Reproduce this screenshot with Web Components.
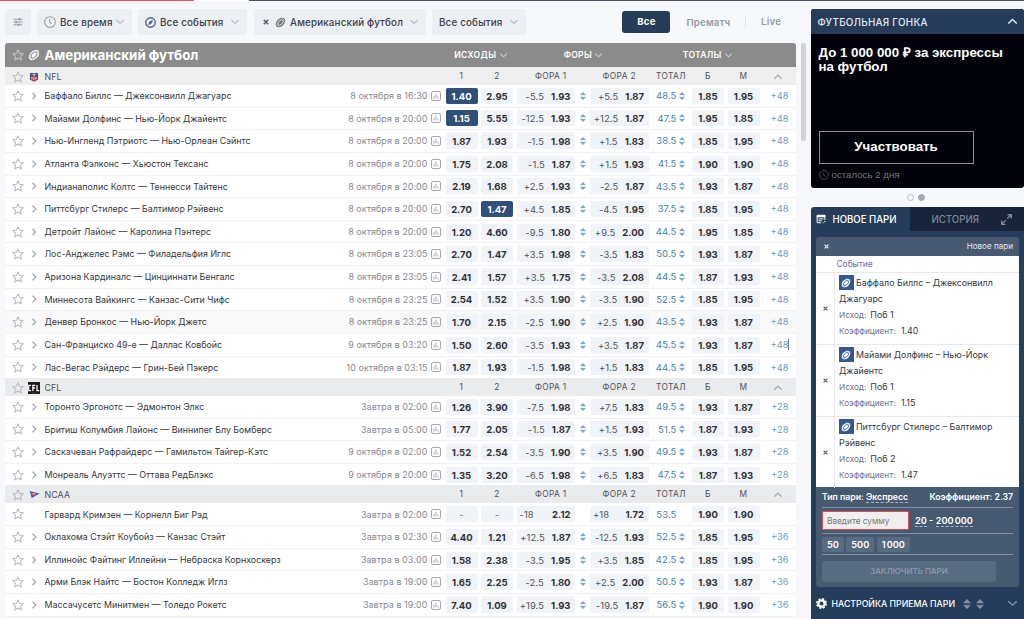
<!DOCTYPE html>
<html lang="ru">
<head>
<meta charset="utf-8">
<title>Линия</title>
<style>
    html, body { margin: 0; height: 100%; }
    body {
        width: 1024px;
        height: 619px;
        overflow: hidden;
        background: #f7f8fb;
        color: #3b3f46;
        font-family: Inter, "Liberation Sans", sans-serif;
    }
</style>
</head>
<body>
<betting-page></betting-page>

<script>
const BALL = `<g transform="rotate(-45 8 8)"><ellipse cx="8" cy="8" rx="8.2" ry="5.4" fill="currentColor"/><ellipse cx="8" cy="8" rx="4.8" ry="3" fill="none" stroke="var(--seam, #8b8b8b)" stroke-width="1.3"/><path d="M2 5.500v5M14 5.500v5" stroke="var(--seam, #8b8b8b)" stroke-width=".8"/></g>`;

const ICONS = {
    star: `<path d="M8 1.2l2.1 4.6 5 .5-3.8 3.3 1.1 5L8 12l-4.4 2.6 1.1-5L.9 6.3l5-.5z" fill="none" stroke="currentColor" stroke-width="1.4" stroke-linejoin="round"/>`,
    right: `<path d="M5 1.500l6.500 6.500L5 14.500" fill="none" stroke="currentColor" stroke-width="2.6"/>`,
    down: `<path d="M.5 4l7.500 7L15.500 4" fill="none" stroke="currentColor" stroke-width="2.4"/>`,
    up: `<path d="M.5 11.5L8 4.500l7.500 7" fill="none" stroke="currentColor" stroke-width="2.6"/>`,
    close: `<path d="M2 2l12 12M14 2L2 14" fill="none" stroke="currentColor" stroke-width="3.8"/>`,
    ball: BALL,
    clock: `<circle cx="8" cy="8" r="7.1" fill="none" stroke="currentColor" stroke-width="1.4"/><path d="M7.6 3.8V8.4l2.8 1.8" fill="none" stroke="currentColor" stroke-width="1.4"/>`,
    compass: `<circle cx="8" cy="8" r="6.9" fill="none" stroke="currentColor" stroke-width="1.9"/><path d="M12 4L9.4 9.4 4 12l2.6-5.4z" fill="currentColor"/>`,
    sliders: `<path d="M1 3.5h14M1 8h14M1 12.5h14" stroke="currentColor" stroke-width="1.6"/><path d="M10.5 1.5v4M5 6v4M9 10.5v4" stroke="currentColor" stroke-width="2.6"/>`,
    stats: `<rect x=".8" y=".8" width="14.4" height="14.4" rx="2.5" fill="none" stroke="currentColor" stroke-width="1.6"/><path d="M4.8 7.5V12M8 4v8M11.2 9v3" stroke="currentColor" stroke-width="1.5"/>`,
    sort: `<path d="M8 0l6 6.200H2zM8 16l6-6.200H2z" fill="currentColor"/><path d="M2 8h12" stroke="currentColor" stroke-width=".7"/>`,
    expand: `<path d="M9.5 1H15v5.5M15 1L9 7M6.500 15H1V9.500M1 15l6-6" fill="none" stroke="currentColor" stroke-width="2"/>`,
    slip: `<path d="M1 1h14v4H1z" fill="currentColor"/><path d="M1.800 4v10h6.500M14.200 4v5.500M4 7.800h8M4 10.800h5" fill="none" stroke="currentColor" stroke-width="1.600"/><path d="M9.500 15l5.500-4.500v2z" fill="currentColor"/>`,
    gear: `<circle cx="8" cy="8" r="4.600" fill="none" stroke="currentColor" stroke-width="3.400"/><circle cx="8" cy="8" r="6.800" fill="none" stroke="currentColor" stroke-width="2.200" stroke-dasharray="3.100 2.240"/>`,
    nfl: `<path d="M1.500 2.200L4 1l4 .8L12 1l2.500 1.200V12L8 15.600 1.500 12z" fill="#2b4c86"/><path d="M2.800 7h10.400v4.600L8 14.300l-5.200-2.700z" fill="#e04a50"/><path d="M4.500 8v3.500M8 8v4.500M11 8v3" stroke="#fff" stroke-width=".9"/><path d="M4 4h2M10 4h2M7.500 3h1v3h-1z" stroke="#fff" stroke-width="1"/>`,
    cfl: `<rect width="16" height="16" fill="#1c1b1c"/><path d="M4 4.500H1v7h3M6.500 12V4.500h3.200M6.500 8h2.800M12 4v7.500h3" fill="none" stroke="#fff" stroke-width="1.700"/><path d="M5 14.500h6" stroke="#a33" stroke-width=".8"/>`,
    ncaa: `<path d="M1 3l14.500 3.500L4 13z" fill="#3763ad"/><path d="M3.500 5.200l8 1.800-6.500 3.600z" fill="#e2415f"/><path d="M5 7h4" stroke="#fff" stroke-width="1"/>`
};

const NFL = [
    ["Баффало Биллс — Джексонвилл Джагуарс", "8 октября в 16:30", "*1.40", "2.95", "-5.5", "1.93", "+5.5", "1.87", "48.5", "1.85", "1.95", "+48"],
    ["Майами Долфинс — Нью-Йорк Джайентс", "8 октября в 20:00", "*1.15", "5.55", "-12.5", "1.93", "+12.5", "1.87", "47.5", "1.95", "1.85", "+48"],
    ["Нью-Ингленд Пэтриотс — Нью-Орлеан Сэйнтс", "8 октября в 20:00", "1.87", "1.93", "-1.5", "1.98", "+1.5", "1.83", "38.5", "1.85", "1.95", "+48"],
    ["Атланта Фэлконс — Хьюстон Тексанс", "8 октября в 20:00", "1.75", "2.08", "-1.5", "1.87", "+1.5", "1.93", "41.5", "1.90", "1.90", "+48"],
    ["Индианаполис Колтс — Теннесси Тайтенс", "8 октября в 20:00", "2.19", "1.68", "+2.5", "1.93", "-2.5", "1.87", "43.5", "1.93", "1.87", "+48"],
    ["Питтсбург Стилерс — Балтимор Рэйвенс", "8 октября в 20:00", "2.70", "*1.47", "+4.5", "1.85", "-4.5", "1.95", "37.5", "1.85", "1.95", "+48"],
    ["Детройт Лайонс — Каролина Пэнтерс", "8 октября в 20:00", "1.20", "4.60", "-9.5", "1.80", "+9.5", "2.00", "44.5", "1.95", "1.85", "+48"],
    ["Лос-Анджелес Рэмс — Филадельфия Иглс", "8 октября в 23:05", "2.70", "1.47", "+3.5", "1.98", "-3.5", "1.83", "50.5", "1.93", "1.87", "+48"],
    ["Аризона Кардиналс — Цинциннати Бенгалс", "8 октября в 23:05", "2.41", "1.57", "+3.5", "1.75", "-3.5", "2.08", "44.5", "1.87", "1.93", "+48"],
    ["Миннесота Вайкингс — Канзас-Сити Чифс", "8 октября в 23:25", "2.54", "1.52", "+3.5", "1.90", "-3.5", "1.90", "52.5", "1.85", "1.95", "+48"],
    ["Денвер Бронкос — Нью-Йорк Джетс", "8 октября в 23:25", "1.70", "2.15", "-2.5", "1.90", "+2.5", "1.90", "43.5", "1.93", "1.87", "+48", "hover"],
    ["Сан-Франциско 49-е — Даллас Ковбойс", "9 октября в 03:20", "1.50", "2.60", "-3.5", "1.93", "+3.5", "1.87", "45.5", "1.93", "1.87", "+48", "caret"],
    ["Лас-Вегас Рэйдерс — Грин-Бей Пэкерс", "10 октября в 03:15", "1.87", "1.93", "-1.5", "1.98", "+1.5", "1.83", "44.5", "1.85", "1.95", "+48"]
];

const CFL = [
    ["Торонто Эргонотс — Эдмонтон Элкс", "Завтра в 02:00", "1.26", "3.90", "-7.5", "1.98", "+7.5", "1.83", "49.5", "1.93", "1.87", "+28"],
    ["Бритиш Колумбия Лайонс — Виннипег Блу Бомберс", "Завтра в 05:00", "1.77", "2.05", "-1.5", "1.87", "+1.5", "1.93", "51.5", "1.87", "1.93", "+28"],
    ["Саскачеван Рафрайдерс — Гамильтон Тайгер-Кэтс", "9 октября в 02:00", "1.52", "2.54", "-3.5", "1.90", "+3.5", "1.90", "49.5", "1.93", "1.87", "+28"],
    ["Монреаль Алуэттс — Оттава РедБлэкс", "9 октября в 20:00", "1.35", "3.20", "-6.5", "1.98", "+6.5", "1.83", "47.5", "1.87", "1.93", "+28"]
];

const NCAA = [
    ["Гарвард Кримзен — Корнелл Биг Рэд", "Завтра в 02:00", "-", "-", "-18", "2.12", "+18", "1.72", "53.5", "1.90", "1.90", ""],
    ["Оклахома Стэйт Коубойз — Канзас Стэйт", "Завтра в 02:30", "4.40", "1.21", "+12.5", "1.87", "-12.5", "1.93", "52.5", "1.85", "1.95", "+36"],
    ["Иллинойс Файтинг Иллейни — Небраска Корнхоскерз", "Завтра в 03:00", "1.58", "2.38", "-3.5", "1.95", "+3.5", "1.85", "42.5", "1.85", "1.95", "+36"],
    ["Арми Блэк Найтс — Бостон Колледж Иглз", "Завтра в 19:00", "1.65", "2.25", "-2.5", "1.80", "+2.5", "2.00", "50.5", "1.93", "1.87", "+36"],
    ["Массачусетс Минитмен — Толедо Рокетс", "Завтра в 19:00", "7.40", "1.09", "+19.5", "1.93", "-19.5", "1.87", "56.5", "1.90", "1.90", "+36"]
];

// shared column tracks for the league bars and rows
const TRACKS = "22px 14px 386.5px 18px 35.5px 35.5px 58.5px 15px 59px 43px 35.5px 32px 36.5px";

class UiIcon extends HTMLElement {
    connectedCallback() {
        const size = this.getAttribute("size") || 10;
        const root = this.attachShadow({mode: "open"});
        root.innerHTML = `
        <style>
            :host { display: inline-block; flex: none; width: ${size}px; height: ${size}px; }
            svg { display: block; width: 100%; height: 100%; }
        </style>
        <svg viewBox="0 0 16 16">${ICONS[this.getAttribute("name")]}</svg>`;
    }
}
customElements.define("ui-icon", UiIcon);

class FilterChip extends HTMLElement {
    constructor() {
        super();
        this.attachShadow({mode: "open"}).innerHTML = `
        <style>
            :host {
                display: flex;
                align-items: center;
                box-sizing: border-box;
                height: 26px;
                padding: 0 8px 0 7px;
                border-radius: 3px;
                background: #eceff4;
                color: #3c4047;
                font-size: 9.8px;
                font-weight: 500;
                letter-spacing: .18px;
                white-space: nowrap;
            }
            .arrow { margin-left: auto; color: #b9bec6; }
            :host([plain]) .arrow { display: none; }
            :host([plain]) { justify-content: center; padding: 0; color: #9a9fa7; }
        </style>
        <slot></slot>
        <ui-icon class="arrow" name="down" size="8"></ui-icon>`;
    }
}
customElements.define("filter-chip", FilterChip);

class FilterBar extends HTMLElement {
    constructor() {
        super();
        this.attachShadow({mode: "open"}).innerHTML = `
        <style>
            :host { display: flex; height: 26px; align-items: center; }
            filter-chip { margin-right: 6px; }
            filter-chip ui-icon { margin-right: 4px; }
            .modes {
                display: flex;
                align-items: center;
                margin-left: auto;
                font-size: 9.6px;
                font-weight: 600;
                letter-spacing: .25px;
                color: #929aa5;
            }
            .on {
                width: 48px;
                height: 21.5px;
                line-height: 21.5px;
                border-radius: 3px;
                background: #253c5a;
                color: #fff;
                text-align: center;
                font-weight: 700;
                margin-right: 16px;
            }
            .live { margin-left: 14.5px; padding-left: 15px; border-left: 1px solid #e0e3e8; line-height: 12px; width: 35px; }
        </style>
        <filter-chip plain style="width:26px"><ui-icon name="sliders" size="10" style="margin:0"></ui-icon></filter-chip>
        <filter-chip style="width:95px"><ui-icon name="clock" size="12" style="color:#989da5"></ui-icon>Все время</filter-chip>
        <filter-chip style="width:109px;margin-right:7px"><ui-icon name="compass" size="11" style="color:#41608e"></ui-icon>Все события</filter-chip>
        <filter-chip style="width:172px"><ui-icon name="close" size="6" style="margin:0 6px 0 2px;color:#555e6b"></ui-icon><ui-icon name="ball" size="11" style="color:#777;--seam:#e4e7ec"></ui-icon>Американский футбол</filter-chip>
        <filter-chip style="width:94px">Все события</filter-chip>
        <div class="modes">
            <span class="on">Все</span>
            <span>Прематч</span>
            <span class="live">Live</span>
        </div>`;
    }
}
customElements.define("filter-bar", FilterBar);

class MatchRow extends HTMLElement {
    set match(match) {
        this._match = match;
        this.render();
    }

    cell(value) {
        const on = value[0] === "*";
        const cls = on ? "cell on" : value === "-" ? "cell none" : "cell";
        return `<span class="${cls}">${on ? value.slice(1) : value}</span>`;
    }

    render() {
        const [name, date, w1, w2, h1, o1, h2, o2, total, over, under, more, state] = this._match;
        const fixed = more === "";
        const pair = (h, o) => `<span class="cell pair"><i>${h}</i><b>${o}</b></span>`;
        this.attachShadow({mode: "open"}).innerHTML = `
        <style>
            :host {
                display: grid;
                grid-template-columns: ${TRACKS};
                align-items: center;
                box-sizing: border-box;
                height: 22.64px;
                border-bottom: 1px solid #f0f1f4;
                background: ${state === "hover" ? "#f9f9f9" : "#fff"};
                font-size: 9.5px;
                line-height: 16.5px;
                white-space: nowrap;
            }
            .star { margin-left: 6.7px; color: #b9bcc2; }
            .go { justify-self: center; color: #a7abb2; visibility: ${fixed ? "hidden" : "visible"}; }
            .event { display: flex; justify-content: space-between; padding: 1px 0 0 3.5px; }
            .name { font-size: 8.85px; color: #33373d; }
            .date { font-size: 9px; letter-spacing: .04px; color: #858a94; }
            .stats { margin-left: 3.5px; color: #a4a7ac; }
            .cell {
                box-sizing: border-box;
                width: 32px;
                height: 16px;
                line-height: 17px;
                border-radius: 2px;
                background: #f0f3f8;
                color: #2f3136;
                font-weight: 700;
                text-align: center;
            }
            .on { background: #2f5078; color: #fff; }
            .none { color: #777c84; font-weight: 400; }
            .pair {
                display: flex;
                justify-content: ${fixed ? "space-between" : "flex-end"};
                width: 58.5px;
                padding: 0 4.5px 0 ${fixed ? 3 : 0}px;
            }
            .pair b { font-weight: 700; }
            .pair i { font-style: normal; font-weight: 400; font-size: 9.4px; color: #50555d; margin-right: 7px; letter-spacing: .1px; }
            .sort { justify-self: center; color: #82aac3; }
            .total { display: flex; align-items: center; width: 37px; justify-content: flex-end; color: #457fa6; font-size: 9.5px; letter-spacing: .1px; }
            .total span, .more { padding-top: 1px; }
            .total span { margin-right: 1.5px; }
            .total ui-icon { color: #82aac3; visibility: ${fixed ? "hidden" : "visible"}; }
            .more { justify-self: end; padding-right: 7.5px; color: #6d9dbb; font-size: 9.3px; position: relative; }
            .caret { position: absolute; right: 7px; top: 3px; width: 1px; height: 11px; background: #4e7fa4; }
        </style>
        <ui-icon class="star" name="star" size="12"></ui-icon>
        <ui-icon class="go" name="right" size="8"></ui-icon>
        <div class="event"><span class="name">${name}</span><span class="date">${date}</span></div>
        <ui-icon class="stats" name="stats" size="10"></ui-icon>
        ${this.cell(w1)}${this.cell(w2)}${pair(h1, o1)}
        ${fixed ? "<span></span>" : `<ui-icon class="sort" name="sort" size="8"></ui-icon>`}
        ${pair(h2, o2)}
        <div class="total"><span>${total}</span><ui-icon name="sort" size="8"></ui-icon></div>
        ${this.cell(over)}${this.cell(under)}
        <span class="more">${more}${state === "caret" ? `<span class="caret"></span>` : ""}</span>`;
    }
}
customElements.define("match-row", MatchRow);

class LeagueGroup extends HTMLElement {
    set matches(matches) {
        this._matches = matches;
        this.render();
    }

    render() {
        const title = this.getAttribute("title-text");
        const root = this.attachShadow({mode: "open"});
        root.innerHTML = `
        <style>
            :host { display: block; }
            .bar {
                display: grid;
                grid-template-columns: ${TRACKS};
                align-items: center;
                height: 18px;
                background: var(--bar, #e9ebed);
                color: #4c525c;
                font-size: 8.3px;
                letter-spacing: .4px;
                line-height: 19px;
                white-space: nowrap;
                position: relative;
            }
            .star { margin-left: 6.7px; color: #b9bcc2; }
            .logo { justify-self: center; margin: 0 -2px; }
            .title { padding-left: 3.5px; font-size: 8.8px; letter-spacing: .1px; }
            .c { width: 32px; text-align: center; }
            .w { box-sizing: border-box; width: 58.5px; text-align: center; }
            .w1 { padding-left: 10px; }
            .t { padding-left: 7px; }
            .up { margin-left: 14px; color: #aeb1b6; }
        </style>
        <div class="bar">
            <ui-icon class="star" name="star" size="12"></ui-icon>
            <ui-icon class="logo" name="${this.getAttribute("logo")}" size="${this.getAttribute("logo-size")}"></ui-icon>
            <span class="title">${title}</span>
            <span></span>
            <span class="c">1</span><span class="c">2</span>
            <span class="w w1">ФОРА 1</span><span></span><span class="w">ФОРА 2</span>
            <span class="t">ТОТАЛ</span><span class="c">Б</span><span class="c">М</span>
            <ui-icon class="up" name="up" size="8"></ui-icon>
        </div>`;
        this._matches.forEach(match => {
            const row = document.createElement("match-row");
            row.match = match;
            root.appendChild(row);
        });
    }
}
customElements.define("league-group", LeagueGroup);

class SportTable extends HTMLElement {
    constructor() {
        super();
        const root = this.attachShadow({mode: "open"});
        root.innerHTML = `
        <style>
            :host {
                display: block;
                width: 791px;
                border-radius: 3px 3px 0 0;
                overflow: hidden;
                background: #fff;
            }
            .head {
                display: flex;
                align-items: center;
                height: 24px;
                background: #8b8b8b;
                color: #fff;
                white-space: nowrap;
            }
            .head > ui-icon:first-child { margin: 0 4.5px 0 6.7px; color: #c3c3c3; }
            h1 { margin: 0 0 0 4.3px; width: 409.7px; font-size: 13.3px; line-height: 24px; font-weight: 700; }
            .col { display: flex; align-items: center; gap: 3.5px; font-size: 8.6px; font-weight: 600; letter-spacing: .3px; line-height: 24px; }
            .col ui-icon { color: #c9c9c9; }
            league-group + league-group { margin-top: -1.1px; }
        </style>
        <div class="head">
            <ui-icon name="star" size="12"></ui-icon>
            <ui-icon name="ball" size="12"></ui-icon>
            <h1>Американский футбол</h1>
            <span class="col" style="width:109.5px">ИСХОДЫ <ui-icon name="down" size="7"></ui-icon></span>
            <span class="col" style="width:119px">ФОРЫ <ui-icon name="down" size="7"></ui-icon></span>
            <span class="col">ТОТАЛЫ <ui-icon name="down" size="7"></ui-icon></span>
        </div>
        <league-group title-text="NFL" logo="nfl" logo-size="10" style="--bar:#eee"></league-group>
        <league-group title-text="CFL" logo="cfl" logo-size="12"></league-group>
        <league-group title-text="NCAA" logo="ncaa" logo-size="11"></league-group>`;
        [NFL, CFL, NCAA].forEach((list, i) => {
            root.querySelectorAll("league-group")[i].matches = list;
        });
    }
}
customElements.define("sport-table", SportTable);

class PromoCard extends HTMLElement {
    constructor() {
        super();
        this.attachShadow({mode: "open"}).innerHTML = `
        <style>
            :host { display: block; font-family: "Liberation Sans", Arial, sans-serif; }
            .card { height: 178.500px; border-radius: 3px; overflow: hidden; background: #02020a; color: #fff; }
            header {
                display: flex;
                align-items: center;
                justify-content: space-between;
                height: 25px;
                padding: 0 7px;
                background: #253c5a;
                font: 500 9.900px Inter, sans-serif;
                letter-spacing: .25px;
                color: #e3e8ee;
            }
            .body { padding: 11.500px 8px 0; }
            h2 { margin: 0; height: 85.500px; font-size: 13.3px; line-height: 14.500px; font-weight: 700; }
            .join {
                box-sizing: border-box;
                width: 155px;
                height: 32.500px;
                border: 1px solid #8d8d90;
                line-height: 30px;
                text-align: center;
                font-size: 13.3px;
                font-weight: 700;
            }
            .left { display: flex; align-items: center; gap: 3px; margin-top: 5px; font-size: 9.700px; line-height: 12px; color: #77777b; }
            .left ui-icon { color: #4c4c50; }
            .dots { display: flex; justify-content: center; gap: 4px; padding: 6px 3px 0 0; }
            .dots span { box-sizing: border-box; width: 7px; height: 7px; border-radius: 50%; border: 1px solid #b9bfc8; }
            .dots .on { background: #a0a9b5; border-color: #a0a9b5; }
        </style>
        <div class="card">
            <header>ФУТБОЛЬНАЯ ГОНКА <ui-icon name="up" size="9"></ui-icon></header>
            <div class="body">
                <h2>До 1 000 000 ₽ за экспрессы<br>на футбол</h2>
                <div class="join">Участвовать</div>
                <div class="left"><ui-icon name="clock" size="10"></ui-icon>осталось 2 дня</div>
            </div>
        </div>
        <div class="dots"><span></span><span class="on"></span></div>`;
    }
}
customElements.define("promo-card", PromoCard);

class SlipItem extends HTMLElement {
    constructor() {
        super();
        this.attachShadow({mode: "open"}).innerHTML = `
        <style>
            :host {
                display: flex;
                box-sizing: border-box;
                height: 72px;
                border-top: 1px solid #e6e8ec;
                color: #33373d;
                font-size: 8.900px;
                line-height: 16.200px;
            }
            .x { display: flex; align-items: center; justify-content: center; width: 18px; border-right: 1px solid #e6e8ec; color: #555a62; }
            .info { padding: 2px 0 0 4px; white-space: nowrap; }
            .badge {
                display: inline-flex;
                align-items: center;
                justify-content: center;
                width: 14.500px;
                height: 14.500px;
                margin-right: 2.5px;
                vertical-align: middle;
                background: #35598c;
                color: #fff;
                --seam: #35598c;
            }
            .info div { height: 16.200px; }
            small { font-size: 8.200px; color: #6a7193; margin-right: 4px; }
        </style>
        <div class="x"><ui-icon name="close" size="5"></ui-icon></div>
        <div class="info">
            <div style="display:flex;align-items:center"><span class="badge"><ui-icon name="ball" size="10"></ui-icon></span><slot name="first"></slot></div>
            <div><slot name="second"></slot></div>
            <div><small>Исход:</small><slot name="pick"></slot></div>
            <div><small style="margin-right:5.500px">Коэффициент:</small><slot name="odd"></slot></div>
        </div>`;
    }
}
customElements.define("slip-item", SlipItem);

class BetSlip extends HTMLElement {
    constructor() {
        super();
        this.attachShadow({mode: "open"}).innerHTML = `
        <style>
            :host { display: block; box-sizing: border-box; height: 412px; border-radius: 3px 0 0 0; overflow: hidden; background: #253c5a; color: #fff; white-space: nowrap; }
            .tabs { display: flex; height: 24px; line-height: 25px; font-size: 9.650px; font-weight: 500; }
            .tab { display: flex; align-items: center; gap: 6.500px; width: 94px; padding-left: 5.500px; }
            .history { display: flex; flex: 1; align-items: center; justify-content: space-between; padding: 0 12px 0 21.500px; background: #17243a; color: #7b8696; }
            .box { margin: 6px 5px 0 5.500px; border-radius: 3px; overflow: hidden; background: #475a72; }
            .top { display: flex; align-items: center; justify-content: space-between; height: 18.500px; padding: 0 6px 0 8px; font-size: 8.100px; line-height: 19.500px; color: #e4e8ed; }
            .list { height: 231.500px; background: #fff; }
            .caption { height: 16px; line-height: 16px; padding-left: 20.500px; font-size: 8.400px; color: #6a7193; }
            .form { padding: 0 6px; height: 100px; font-size: 8.700px; font-weight: 600; }
            .line { display: flex; align-items: center; box-sizing: border-box; border-bottom: 1px solid #8290a1; }
            u { text-decoration: none; border-bottom: 1px dashed #aab4c0; line-height: 11px; }
            .sum {
                box-sizing: border-box;
                width: 87px;
                height: 19px;
                margin-right: 6px;
                padding-left: 4px;
                line-height: 18px;
                border: 1px solid #dc4a4e;
                border-radius: 1px;
                background: #efefef;
                color: #777;
                font-size: 8.250px;
                font-weight: 400;
            }
            .chip { height: 15px; line-height: 15.500px; padding: 0 5px; margin-right: 2.500px; border-radius: 2px; background: #596b81; font-size: 9.200px; word-spacing: -1.200px; }
            .submit { width: 174px; height: 21px; margin-top: 6px; line-height: 21.500px; border-radius: 3px; background: #596b81; color: #8a98a8; text-align: center; font-size: 7.950px; font-weight: 600; }
            .settings { display: flex; align-items: center; height: 33px; padding: 0 7px 0 5px; font-size: 8.750px; font-weight: 500; }
            .settings .sort { margin-left: 3px; color: #8492a4; }
        </style>
        <div class="tabs">
            <div class="tab"><ui-icon name="slip" size="10"></ui-icon>НОВОЕ ПАРИ</div>
            <div class="history">ИСТОРИЯ <ui-icon name="expand" size="11"></ui-icon></div>
        </div>
        <div class="box">
            <div class="top"><ui-icon name="close" size="5"></ui-icon>Новое пари</div>
            <div class="list">
                <div class="caption">Событие</div>
                <slip-item><span slot="first">Баффало Биллс – Джексонвилл</span><span slot="second">Джагуарс</span><span slot="pick">Поб 1</span><span slot="odd">1.40</span></slip-item>
                <slip-item><span slot="first">Майами Долфинс – Нью-Йорк</span><span slot="second">Джайентс</span><span slot="pick">Поб 1</span><span slot="odd">1.15</span></slip-item>
                <slip-item><span slot="first">Питтсбург Стилерс – Балтимор</span><span slot="second">Рэйвенс</span><span slot="pick">Поб 2</span><span slot="odd">1.47</span></slip-item>
            </div>
            <div class="form">
                <div class="line" style="height:21px;justify-content:space-between"><span>Тип пари: <u>Экспресс</u></span><span>Коэффициент: 2.37</span></div>
                <div class="line" style="height:26px;font-size:9.200px"><span class="sum">Введите сумму</span><span><u>20</u> - <u style="word-spacing:-1.200px">200 000</u></span></div>
                <div class="line" style="height:21px"><span class="chip">50</span><span class="chip">500</span><span class="chip">1 000</span></div>
                <div class="submit">ЗАКЛЮЧИТЬ ПАРИ</div>
            </div>
        </div>
        <div class="settings">
            <ui-icon name="gear" size="11" style="margin-right:5px"></ui-icon>НАСТРОЙКА ПРИЕМА ПАРИ
            <ui-icon class="sort" name="sort" size="10" style="margin-left:7px"></ui-icon>
            <ui-icon class="sort" name="sort" size="10"></ui-icon>
            <ui-icon name="down" size="9" style="margin-left:auto;color:#8492a4"></ui-icon>
        </div>`;
    }
}
customElements.define("bet-slip", BetSlip);

class BettingPage extends HTMLElement {
    constructor() {
        super();
        this.attachShadow({mode: "open"}).innerHTML = `
        <style>
            :host { display: block; width: 1024px; height: 619px; overflow: hidden; }
            .strip { height: 1px; background: linear-gradient(90deg, #e0565a 194px, #fff 194px 249px, #475069 249px); }
            .page { display: grid; grid-template-columns: 791px 5px 213.500px; column-gap: 4.750px; padding: 8px 0 0 5px; height: 610px; overflow: hidden; }
            .left { display: flex; flex-direction: column; gap: 8px; }
            .thumb { height: 98px; margin-top: 34px; border-radius: 3px; background: #cdd3d6; }
            .right { display: flex; flex-direction: column; justify-content: space-between; }
        </style>
        <div class="strip"></div>
        <div class="page">
            <div class="left"><filter-bar></filter-bar><sport-table></sport-table></div>
            <div class="thumb"></div>
            <div class="right"><promo-card></promo-card><bet-slip></bet-slip></div>
        </div>`;
    }
}
customElements.define("betting-page", BettingPage);
</script>
</body>
</html>
